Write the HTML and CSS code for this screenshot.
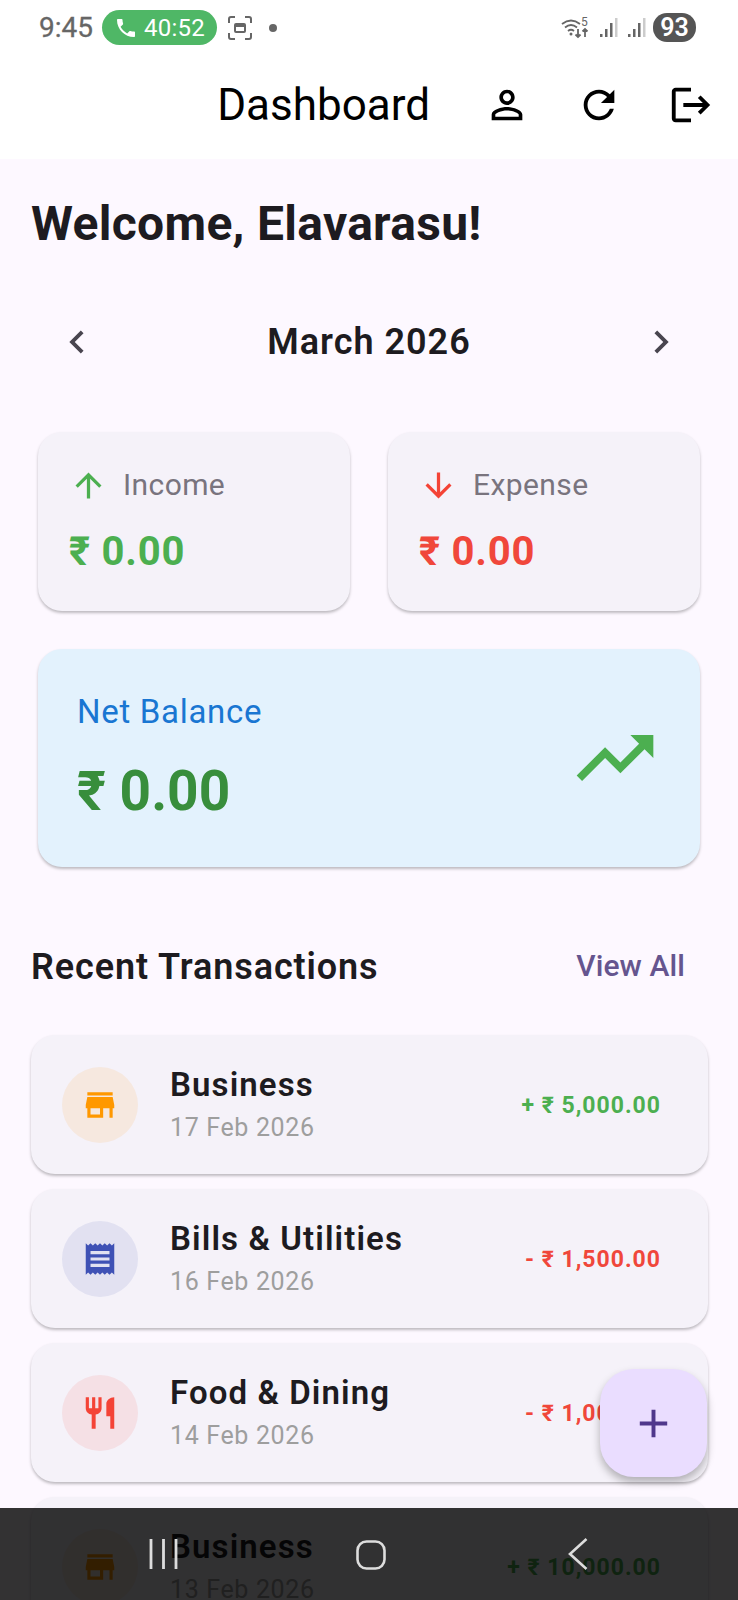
FILE: index.html
```html
<!DOCTYPE html>
<html lang="en">
<head>
<meta charset="utf-8">
<title>Dashboard</title>
<link rel="stylesheet" href="styles.css">
</head>
<body>
<div class="phone">
  <header class="top">
    <div class="status">
      <span class="time">9:45</span>
      <span class="call">
        <svg class="call-icon" viewBox="0 0 24 24"><path d="M6.6 10.8c1.4 2.8 3.8 5.1 6.6 6.6l2.2-2.2c.3-.3.7-.4 1-.2 1.1.4 2.3.6 3.6.6.6 0 1 .4 1 1V20c0 .6-.4 1-1 1C10.600 21 3 13.400 3 4c0-.6.400-1 1-1h3.500c.6 0 1 .4 1 1 0 1.300.2 2.500.6 3.600.1.300 0 .7-.2 1z"/></svg>
        40:52
      </span>
      <svg class="shot" viewBox="0 0 26 26"><path class="shot-frame" d="M2 8V4q0-2 2-2h4M18 2h4q2 0 2 2v4M24 18v4q0 2-2 2h-4M8 24H4q-2 0-2-2v-4"/><path class="shot-fill" d="M7 10q0-2 2-2h8q2 0 2 2v6q0 2-2 2H9q-2 0-2-2zM9 12v4h8v-4z"/></svg>
      <span class="dot"></span>
      <span class="spacer"></span>
      <svg class="wifi" viewBox="0 0 30 24"><path class="thin" d="M1 8q9-7 18 0M4 11.500q6-5 12 0M7 15q3-2.500 6 0"/><circle class="solid" cx="10" cy="18" r="1.500"/><path class="thin" d="M17 13v8M14.500 18.500l2.500 2.500 2.500-2.500M24 21v-8M21.500 15.500l2.500-2.500 2.500 2.500"/><text class="wifi-5" x="20" y="10">5</text></svg>
      <svg class="signal" viewBox="0 0 20 24"><path d="M1 18h2.500v3H1zM6 13h2.500v8H6zM11 7h2.500v14H11z"/><path class="signal-off" d="M16 2h2.500v19H16z"/></svg>
      <svg class="signal" viewBox="0 0 20 24"><path d="M1 18h2.500v3H1zM6 13h2.500v8H6zM11 7h2.500v14H11z"/><path class="signal-off" d="M16 2h2.500v19H16z"/></svg>
      <span class="battery">93</span>
    </div>
    <div class="appbar">
      <h1 class="title">Dashboard</h1>
      <button class="action"><svg viewBox="0 0 24 24"><path d="M12 5.900c1.160 0 2.100.94 2.100 2.100s-.94 2.100-2.100 2.100S9.900 9.160 9.900 8s.94-2.100 2.100-2.100m0 9c2.970 0 6.100 1.460 6.100 2.100v1.100H5.900V17c0-.64 3.130-2.100 6.100-2.100M12 4C9.790 4 8 5.790 8 8s1.790 4 4 4 4-1.790 4-4-1.790-4-4-4zm0 9c-2.670 0-8 1.340-8 4v3h16v-3c0-2.660-5.330-4-8-4z"/></svg></button>
      <button class="action"><svg viewBox="0 0 24 24"><path d="M17.650 6.350C16.200 4.900 14.210 4 12 4c-4.420 0-7.990 3.580-7.990 8s3.570 8 7.990 8c3.730 0 6.840-2.550 7.730-6h-2.080c-.82 2.330-3.040 4-5.650 4-3.310 0-6-2.690-6-6s2.690-6 6-6c1.660 0 3.140.69 4.220 1.780L13 11h7V4l-2.350 2.350z"/></svg></button>
      <button class="action"><svg viewBox="0 0 24 24"><path d="M17 7l-1.410 1.410L18.170 11H8v2h10.170l-2.580 2.580L17 17l5-5zM4 5h8V3H4c-1.100 0-2 .9-2 2v14c0 1.100.9 2 2 2h8v-2H4V5z"/></svg></button>
    </div>
  </header>

  <main class="content">
    <h2 class="welcome">Welcome, Elavarasu!</h2>

    <div class="month">
      <svg class="chev" viewBox="0 0 24 24"><path d="M15.410 7.410L14 6l-6 6 6 6 1.410-1.410L10.830 12z"/></svg>
      <span class="month-name">March 2026</span>
      <svg class="chev" viewBox="0 0 24 24"><path d="M10 6L8.590 7.410 13.170 12l-4.580 4.590L10 18l6-6z"/></svg>
    </div>

    <section class="summary">
      <div class="card">
        <div class="card-head">
          <svg class="arrow up" viewBox="0 0 24 24"><path d="M4 12l1.410 1.410L11 7.830V20h2V7.830l5.580 5.590L20 12l-8-8-8 8z"/></svg>
          <span class="card-label">Income</span>
        </div>
        <div class="card-value up-text">₹ 0.00</div>
      </div>
      <div class="card">
        <div class="card-head">
          <svg class="arrow down" viewBox="0 0 24 24"><path d="M20 12l-1.410-1.410L13 16.170V4h-2v12.170l-5.580-5.590L4 12l8 8 8-8z"/></svg>
          <span class="card-label">Expense</span>
        </div>
        <div class="card-value down-text">₹ 0.00</div>
      </div>
    </section>

    <section class="net">
      <div>
        <div class="net-label">Net Balance</div>
        <div class="net-value">₹ 0.00</div>
      </div>
      <svg class="trend" viewBox="0 0 24 24"><path d="M16 6l2.290 2.290-4.880 4.880-4-4L2 16.590 3.410 18l6-6 4 4 6.300-6.290L22 12V6z"/></svg>
    </section>

    <div class="recent-head">
      <h3 class="recent-title">Recent Transactions</h3>
      <span class="view-all">View All</span>
    </div>

    <ul class="list">
      <li class="row">
        <span class="badge badge-orange"><svg viewBox="0 0 24 24"><path d="M20 4H4v2h16V4zm1 10v-2l-1-5H4l-1 5v2h1v6h10v-6h4v6h2v-6h1zm-9 4H6v-4h6v4z"/></svg></span>
        <div class="row-text"><div class="row-name">Business</div><div class="row-date">17 Feb 2026</div></div>
        <span class="amount up-text">+ ₹ 5,000.00</span>
      </li>
      <li class="row">
        <span class="badge badge-indigo"><svg viewBox="0 0 24 24"><path d="M18 17H6v-2h12v2zm0-4H6v-2h12v2zm0-4H6V7h12v2zM3 22l1.500-1.500L6 22l1.500-1.500L9 22l1.500-1.500L12 22l1.500-1.500L15 22l1.500-1.500L18 22l1.500-1.500L21 22V2l-1.500 1.500L18 2l-1.500 1.500L15 2l-1.500 1.500L12 2l-1.500 1.500L9 2 7.500 3.500 6 2 4.500 3.500 3 2v20z"/></svg></span>
        <div class="row-text"><div class="row-name">Bills &amp; Utilities</div><div class="row-date">16 Feb 2026</div></div>
        <span class="amount down-text">- ₹ 1,500.00</span>
      </li>
      <li class="row">
        <span class="badge badge-red"><svg viewBox="0 0 24 24"><path d="M11 9H9V2H7v7H5V2H3v7c0 2.120 1.660 3.840 3.750 3.970V22h2.500v-9.030C11.340 12.840 13 11.120 13 9V2h-2v7zm5-3v8h2.500v8H21V2c-2.760 0-5 2.240-5 4z"/></svg></span>
        <div class="row-text"><div class="row-name">Food &amp; Dining</div><div class="row-date">14 Feb 2026</div></div>
        <span class="amount down-text">- ₹ 1,000.00</span>
      </li>
      <li class="row">
        <span class="badge badge-orange"><svg viewBox="0 0 24 24"><path d="M20 4H4v2h16V4zm1 10v-2l-1-5H4l-1 5v2h1v6h10v-6h4v6h2v-6h1zm-9 4H6v-4h6v4z"/></svg></span>
        <div class="row-text"><div class="row-name">Business</div><div class="row-date">13 Feb 2026</div></div>
        <span class="amount up-text">+ ₹ 10,000.00</span>
      </li>
    </ul>
  </main>

  <button class="fab"><svg viewBox="0 0 24 24"><path d="M19 13h-6v6h-2v-6H5v-2h6V5h2v6h6v2z"/></svg></button>

  <nav class="navbar">
    <svg class="nav-recent" viewBox="0 0 30 30"><path d="M2 0v30M14.500 0v30M27 0v30"/></svg>
    <svg class="nav-home" viewBox="0 0 30 30"><rect x="1.500" y="1.500" width="27" height="27" rx="9"/></svg>
    <svg class="nav-back" viewBox="0 0 20 32"><path d="M18.500 1L2 16l16.500 15"/></svg>
  </nav>
</div>
</body>
</html>
```
FILE: styles.css
```css
* { box-sizing: border-box; }
html, body { margin: 0; padding: 0; }
body { font-family: Roboto, "Noto Sans", sans-serif; color: #1d1b20; background: #fdf8ff; }
h1, h2, h3, ul { margin: 0; padding: 0; }
ul { list-style: none; }
button { border: 0; background: none; padding: 0; font: inherit; }

.phone { position: relative; width: 738px; height: 1600px; overflow: hidden; background: #fdf8ff; }

/* top */
.top { background: #fff; height: 159px; }
.status { height: 60px; padding: 10px 42px 15px 39px; display: flex; align-items: center; color: #666; }
.time { font-size: 28px; font-weight: 400; line-height: 36px; width: 63px; -webkit-text-stroke: .3px #666; }
.call { width: 115px; height: 35px; border-radius: 18px; background: #4fb766; color: #fff; font-size: 24px; font-weight: 400; letter-spacing: .2px; display: flex; align-items: center; justify-content: center; gap: 6px; }
.call-icon { width: 24px; height: 24px; fill: #fff; }
.shot { width: 26px; height: 26px; margin-left: 10px; }
.shot-frame { fill: none; stroke: #666; stroke-width: 2; }
.shot-fill { fill: #666; fill-rule: evenodd; }
.dot { width: 8px; height: 8px; border-radius: 50%; background: #666; margin-left: 16px; }
.spacer { flex: 1; }
.wifi { width: 30px; height: 24px; }
.thin { fill: none; stroke: #666; stroke-width: 1.800; }
.solid { fill: #666; }
.wifi-5 { font-size: 12px; fill: #666; font-family: Roboto, sans-serif; }
.signal { width: 20px; height: 24px; margin-left: 8px; fill: #666; }
.signal-off { fill: #ccc; }
.battery { width: 43px; height: 29px; margin-left: 6px; border-radius: 14px; background: #555; color: #fff; font-size: 25px; font-weight: 600; line-height: 29px; text-align: center; }

.appbar { height: 90px; padding-right: 1px; display: flex; align-items: center; justify-content: flex-end; }
.title { font-size: 44px; font-weight: 400; line-height: 56px; color: #000; margin-right: 31px; }
.action { width: 92px; height: 90px; display: flex; align-items: center; justify-content: center; }
.action svg { width: 46px; height: 46px; fill: #000; }

/* content */
.content { padding: 37px 30px 0 31px; }
.welcome { font-size: 48px; font-weight: 700; line-height: 56px; letter-spacing: .3px; }

.month { height: 92px; margin-top: 44px; display: flex; align-items: center; justify-content: space-between; padding: 0 24px 0 23px; }
.chev { width: 46px; height: 46px; fill: #49454f; }
.month-name { font-size: 36px; font-weight: 600; line-height: 44px; letter-spacing: 1px; }

.summary { margin: 44px 8px 0 7px; display: flex; gap: 38px; }
.card { flex: 1; height: 179px; border-radius: 24px; background: #f5f2f9; box-shadow: 0 2px 3px rgba(0, 0, 0, .25); padding: 33px 31px 0; }
.card-head { display: flex; align-items: center; height: 40px; gap: 15px; }
.arrow { width: 39px; height: 39px; }
.arrow.up { fill: #4caf50; }
.arrow.down { fill: #f44336; }
.card-label { font-size: 30px; line-height: 40px; letter-spacing: .4px; color: #79747e; }
.card-value { margin-top: 22px; font-size: 40px; font-weight: 700; line-height: 50px; letter-spacing: .8px; }
.up-text { color: #4caf50; }
.down-text { color: #f0473b; }

.net { margin: 38px 8px 0 7px; height: 218px; border-radius: 24px; background: #e3f2fd; box-shadow: 0 2px 3px rgba(0, 0, 0, .25); padding: 0 39px; display: flex; align-items: center; justify-content: space-between; }
.net-label { font-size: 33px; line-height: 40px; letter-spacing: .7px; color: #1976d2; }
.net-value { margin-top: 26px; font-size: 55px; font-weight: 700; line-height: 66px; color: #388e3c; }
.trend { width: 92px; height: 92px; fill: #4caf50; }

.recent-head { margin-top: 73px; height: 50px; display: flex; align-items: center; justify-content: space-between; padding-right: 23px; }
.recent-title { font-size: 36px; font-weight: 600; line-height: 44px; letter-spacing: .9px; padding-top: 4px; }
.view-all { font-size: 30px; font-weight: 500; letter-spacing: .1px; color: #65558f; }

.list { margin-top: 45px; display: flex; flex-direction: column; gap: 15px; }
.row { height: 139px; border-radius: 24px; background: #f5f2f9; box-shadow: 0 2px 3px rgba(0, 0, 0, .25); padding: 0 47px 0 31px; display: flex; align-items: center; }
.badge { width: 76px; height: 76px; border-radius: 50%; display: flex; align-items: center; justify-content: center; flex: none; }
.badge svg { width: 38px; height: 38px; }
.badge-orange { background: rgba(255, 152, 0, .1); }
.badge-orange svg { fill: #ff9800; }
.badge-indigo { background: rgba(63, 81, 181, .1); }
.badge-indigo svg { fill: #3f51b5; }
.badge-red { background: rgba(244, 67, 54, .1); }
.badge-red svg { fill: #f44336; }
.row-text { flex: 1; margin-left: 32px; padding-top: 1px; }
.row-name { font-size: 33px; font-weight: 600; line-height: 40px; letter-spacing: 1.1px; }
.row-date { margin-top: 6px; font-size: 25px; line-height: 34px; letter-spacing: .65px; color: #9e9e9e; }
.amount { font-size: 23px; font-weight: 700; letter-spacing: 1px; padding-top: 1px; }

/* overlays */
.fab { position: absolute; left: 600px; top: 1369px; width: 107px; height: 108px; border-radius: 34px; background: #eaddff; box-shadow: 0 5px 8px rgba(0, 0, 0, .28); display: flex; align-items: center; justify-content: center; }
.fab svg { width: 47px; height: 47px; fill: #4f378b; }

.navbar { position: absolute; left: 0; right: 0; top: 1508px; height: 92px; background: rgba(0, 0, 0, .8); }
.nav-recent, .nav-home, .nav-back { position: absolute; fill: none; stroke: #ddd; }
.nav-recent { left: 149px; top: 31px; width: 30px; height: 30px; stroke-width: 2.800; }
.nav-home { left: 356px; top: 32px; width: 30px; height: 30px; stroke-width: 2.600; }
.nav-back { left: 568px; top: 30px; width: 20px; height: 32px; stroke-width: 2.600; }
```
